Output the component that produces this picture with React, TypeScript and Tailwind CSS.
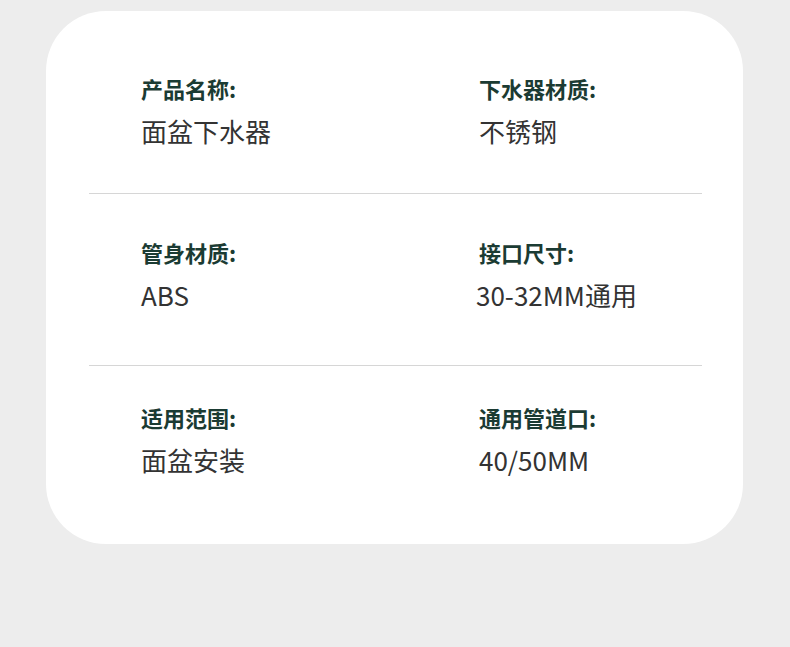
const rows = [
  [
    { label: '产品名称：', value: '面盆下水器' },
    { label: '下水器材质：', value: '不锈钢' },
  ],
  [
    { label: '管身材质：', value: 'ABS' },
    { label: '接口尺寸：', value: '30-32MM通用' },
  ],
  [
    { label: '适用范围：', value: '面盆安装' },
    { label: '通用管道口：', value: '40/50MM' },
  ],
]

const font = { fontFamily: '"Noto Sans CJK SC", "Noto Sans", sans-serif' }

function Cell({ label, value, shift }: { label: string; value: string; shift?: boolean }) {
  return (
    <div>
      <div className="text-[22px] leading-[22px] font-bold text-[#1b3b33]">
        {label.replace('：', ':')}
      </div>
      <div className={`mt-[19px] text-[26px] leading-[26px] text-[#333333] ${shift ? '-ml-[3px]' : ''}`}>
        {value}
      </div>
    </div>
  )
}

export default function App() {
  return (
    <div className="min-h-[647px] bg-[#ededed] pt-[11px] pl-[46px]" style={font}>
      <div className="w-[697px] h-[533px] rounded-[60px] bg-white pl-[43px] pr-[41px] pt-[66px]">
        {rows.map((row, i) => (
          <div key={i}>
            <div className={`flex ${i === 1 ? 'pt-[47px]' : i === 2 ? 'pt-[40px]' : ''}`}>
              <div className="w-[390px] pl-[52px]">
                <Cell {...row[0]} />
              </div>
              <div>
                <Cell {...row[1]} shift={i === 1} />
              </div>
            </div>
            {i < 2 && (
              <div className={`h-px bg-[#d6d6d6] ${i === 0 ? 'mt-[49px]' : 'mt-[57px]'}`} />
            )}
          </div>
        ))}
      </div>
    </div>
  )
}
